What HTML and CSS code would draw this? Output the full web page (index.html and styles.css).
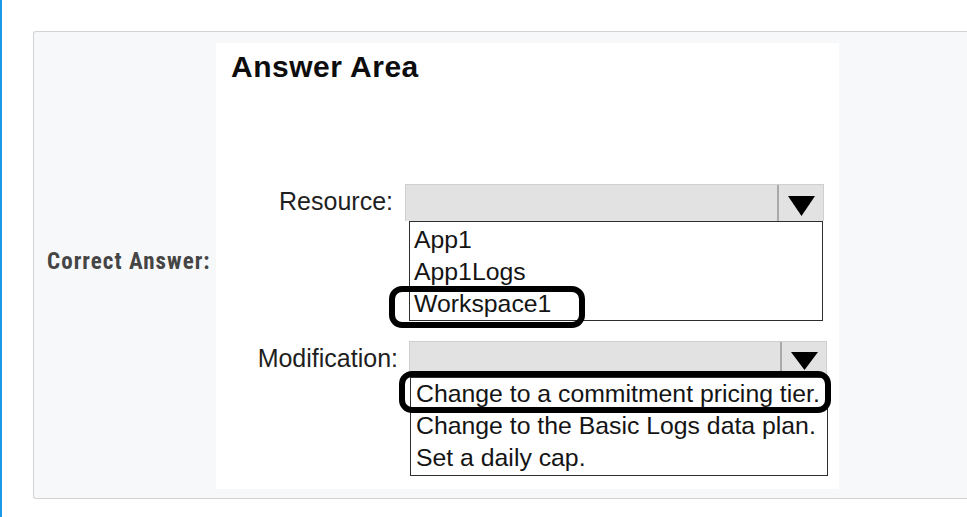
FILE: index.html
```html
<!DOCTYPE html>
<html>
<head>
<meta charset="utf-8">
<link rel="stylesheet" href="styles.css">
</head>
<body>
<div class="page">
  <div class="panel">
    <div class="label-col"><span class="correct">Correct Answer:</span></div>
    <div class="answer">
      <h1 class="title">Answer Area</h1>
      <div class="row row-res">
        <div class="label">Resource:</div>
        <div class="control">
          <div class="select">
            <div class="select-field"></div>
            <div class="select-arrow"><svg width="27" height="20" viewBox="0 0 27 20"><polygon points="0,0 27,0 13.5,20" fill="#000"/></svg></div>
          </div>
          <div class="list">
            <div class="item">App1</div>
            <div class="item">App1Logs</div>
            <div class="item">Workspace1</div>
          </div>
        </div>
      </div>
      <div class="row row-mod">
        <div class="label">Modification:</div>
        <div class="control">
          <div class="select">
            <div class="select-field"></div>
            <div class="select-arrow"><svg width="27" height="18" viewBox="0 0 27 18"><polygon points="0,0 27,0 13.5,18" fill="#000"/></svg></div>
          </div>
          <div class="list">
            <div class="item">Change to a commitment pricing tier.</div>
            <div class="item">Change to the Basic Logs data plan.</div>
            <div class="item">Set a daily cap.</div>
          </div>
        </div>
      </div>
      <div class="oval oval-1"></div>
      <div class="oval oval-2"></div>
    </div>
  </div>
</div>
</body>
</html>
```
FILE: styles.css
```css
html, body {
  margin: 0;
  padding: 0;
  background: #fff;
}
body {
  width: 967px;
  height: 517px;
  overflow: hidden;
}
.page {
  height: 517px;
  border-left: 2px solid #1b9ae6;
  padding-top: 31px;
  padding-left: 31px;
  box-sizing: border-box;
}
.panel {
  display: flex;
  height: 468px;
  box-sizing: border-box;
  border: 1px solid #d2d3d5;
  border-right: none;
  border-radius: 3px 0 0 3px;
  background: #f7f8fa;
  padding-top: 11px;
  padding-bottom: 9px;
}
.label-col {
  width: 182px;
  display: flex;
  align-items: center;
  padding-left: 13px;
  box-sizing: border-box;
  padding-bottom: 10px;
}
.correct {
  font-family: "Liberation Sans Narrow", "Roboto Condensed", Roboto, sans-serif;
  font-weight: bold;
  font-size: 23px;
  letter-spacing: 1.05px;
  color: #454545;
  white-space: nowrap;
}
.answer {
  position: relative;
  width: 623px;
  background: #fff;
  padding-top: 7px;
  box-sizing: border-box;
  font-family: "Liberation Sans", Arial, sans-serif;
}
.title {
  margin: 0 0 0 15px;
  font-size: 30px;
  letter-spacing: 0.5px;
  line-height: 34px;
  font-weight: bold;
  color: #0d0d0d;
}
.row {
  display: flex;
  align-items: flex-start;
}
.row-res {
  margin-top: 100px;
}
.row-mod {
  margin-top: 20px;
}
.label {
  text-align: right;
  font-size: 25px;
  line-height: 34px;
  color: #1f1f1f;
  box-sizing: border-box;
}
.row-res .label {
  width: 189px;
  padding-right: 12px;
}
.row-mod .label {
  width: 193px;
  padding-right: 11px;
}
.control {
  display: flex;
  flex-direction: column;
}
.row-res .control {
  width: 419px;
}
.row-mod .control {
  width: 418px;
}
.select {
  display: flex;
  height: 37px;
  box-sizing: border-box;
  border: 1px solid #cfcfcf;
  border-bottom: none;
  background: #e2e2e2;
}
.row-mod .select {
  height: 36px;
}
.select-field {
  flex: 1;
}
.select-arrow {
  width: 46px;
  border-left: 2px solid #a9a9a9;
  display: flex;
  justify-content: center;
  padding-top: 11px;
  box-sizing: border-box;
}
.row-mod .select-arrow {
  padding-top: 10px;
}
.list {
  border: 1px solid #2e2e2e;
  background: #fff;
  box-sizing: border-box;
}
.row-res .list {
  margin-left: 4px;
  margin-right: 1px;
  padding-top: 2px;
}
.row-mod .list {
  margin-left: 1px;
  margin-right: -1px;
  padding-bottom: 1px;
}
.item {
  font-size: 24.8px;
  line-height: 32px;
  color: #141414;
  padding-left: 4px;
  white-space: nowrap;
}
.row-mod .item {
  padding-left: 5px;
}
.oval {
  position: absolute;
  border: 6px solid #000;
  border-radius: 13px;
  box-sizing: border-box;
}
.oval-1 {
  left: 173px;
  top: 243px;
  width: 196px;
  height: 42px;
}
.oval-2 {
  left: 183px;
  top: 328px;
  width: 432px;
  height: 42px;
}
```
